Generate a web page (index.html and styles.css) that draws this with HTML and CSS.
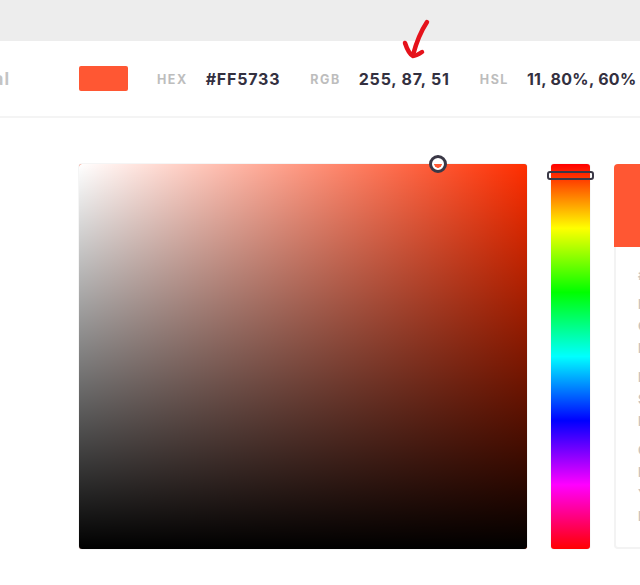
FILE: index.html
```html
<!DOCTYPE html>
<html>
<head>
    <title>Color Picker</title>
    <link rel="stylesheet" href="styles.css">
</head>
<body>
    <div class="topbar"></div>
    <div class="toolbar">
        <div class="mode"><span>Visual</span></div>
        <div class="swatch"></div>
        <div class="value"><span class="label">HEX</span><span class="code">#FF5733</span></div>
        <div class="value"><span class="label">RGB</span><span class="code">255, 87, 51</span></div>
        <div class="value"><span class="label">HSL</span><span class="code code-tight">11, 80%, 60%</span></div>
    </div>
    <svg class="arrow" width="40" height="50" viewBox="0 0 40 50">
        <path d="M32 7 C26 16 22 25 18 40" />
        <path d="M10 28 C12 34 14 39 18 41 C21 41 24 39 27 37" />
    </svg>
    <div class="main">
        <div class="picker">
            <div class="picker-white"></div>
            <div class="picker-black"></div>
            <div class="picker-handle"></div>
        </div>
        <div class="hue">
            <div class="hue-handle"></div>
        </div>
        <div class="card">
            <div class="card-color"></div>
            <div class="card-body">
                <div class="group"><span>#FF5733</span></div>
                <div class="group"><span>RED</span><span>GREEN</span><span>BLUE</span></div>
                <div class="group"><span>HUE</span><span>SAT</span><span>LUM</span></div>
                <div class="group"><span>CYAN</span><span>MAGENTA</span><span>YELLOW</span><span>KEY</span></div>
            </div>
        </div>
    </div>
</body>
</html>
```

FILE: styles.css
```css
body {
    margin: 0;
    height: 585px;
    overflow: hidden;
    background-color: #ffffff;
    font-family: 'Inter', 'Liberation Sans', sans-serif;
}

.topbar {
    height: 41px;
    background-color: #ededed;
}

.toolbar {
    display: flex;
    align-items: center;
    height: 75px;
    border-bottom: 2px solid #f4f4f4;
}

.mode {
    display: flex;
    flex: none;
    justify-content: flex-end;
    width: 10px;
    margin-right: 69px;
    overflow: hidden;
    font-size: 17px;
    font-weight: 700;
    letter-spacing: 1px;
    color: #c4c4c4;
}

.swatch {
    flex: none;
    width: 49px;
    height: 25px;
    margin-right: 29px;
    background-color: #ff5733;
    border-radius: 2px;
}

.value {
    display: flex;
    flex: none;
    align-items: center;
    gap: 18px;
    margin-right: 30px;
    padding-top: 1px;
    white-space: nowrap;
}

.label {
    font-size: 12.5px;
    font-weight: 700;
    letter-spacing: 1.5px;
    color: #bdbdbd;
}

.code {
    font-size: 16px;
    font-weight: 700;
    letter-spacing: 0.8px;
    color: #33303f;
}

.code-tight {
    letter-spacing: 0.3px;
}

.arrow {
    position: absolute;
    top: 15px;
    left: 395px;
    fill: none;
    stroke: #e5121b;
    stroke-width: 4.5;
    stroke-linecap: round;
    stroke-linejoin: round;
}

.main {
    display: flex;
    height: 385px;
    margin-top: 46px;
    padding-left: 79px;
}

.picker {
    position: relative;
    flex: none;
    width: 448px;
    margin-right: 24px;
    background-color: #ff2e00;
    border-radius: 3px;
    box-shadow: 0 0 1px rgba(0, 0, 0, 0.4);
}

.picker-white,
.picker-black {
    position: absolute;
    top: 0;
    right: 0;
    bottom: 0;
    left: 0;
    border-radius: 3px;
}

.picker-white {
    background: linear-gradient(to right, #ffffff, rgba(255, 255, 255, 0));
}

.picker-black {
    background: linear-gradient(to bottom, rgba(0, 0, 0, 0), #000000);
}

.picker-handle {
    position: absolute;
    top: -9px;
    left: 350px;
    box-sizing: border-box;
    width: 18px;
    height: 18px;
    border: 3px solid #3a3846;
    border-radius: 50%;
    background:
        linear-gradient(to bottom, #ffffff 50%, transparent 50%),
        radial-gradient(circle, #ff5733 3.5px, #ffffff 4px);
}

.hue {
    position: relative;
    flex: none;
    width: 39px;
    margin-right: 24px;
    border-radius: 3px;
    background: linear-gradient(to bottom, #ff0000, #ffff00, #00ff00, #00ffff, #0000ff, #ff00ff, #ff0000);
    box-shadow: 0 0 1px rgba(0, 0, 0, 0.3);
}

.hue-handle {
    position: absolute;
    top: 7px;
    left: -4px;
    box-sizing: border-box;
    width: 47px;
    height: 9px;
    border: 2.5px solid #3a3846;
    border-radius: 3px;
}

.card {
    flex: none;
    width: 120px;
}

.card-color {
    height: 83px;
    background-color: #ff5733;
    border-radius: 4px 4px 0 0;
}

.card-body {
    display: flex;
    flex-direction: column;
    box-sizing: border-box;
    gap: 14px;
    height: 302px;
    padding: 21px 0 0 22px;
    border: 2px solid #f3f3f3;
    border-top: 0;
    border-radius: 0 0 4px 4px;
    font-size: 13px;
    font-weight: 700;
    color: #c9c3bd;
}

.group {
    display: flex;
    flex-direction: column;
    gap: 7px;
    line-height: 15px;
}
```
